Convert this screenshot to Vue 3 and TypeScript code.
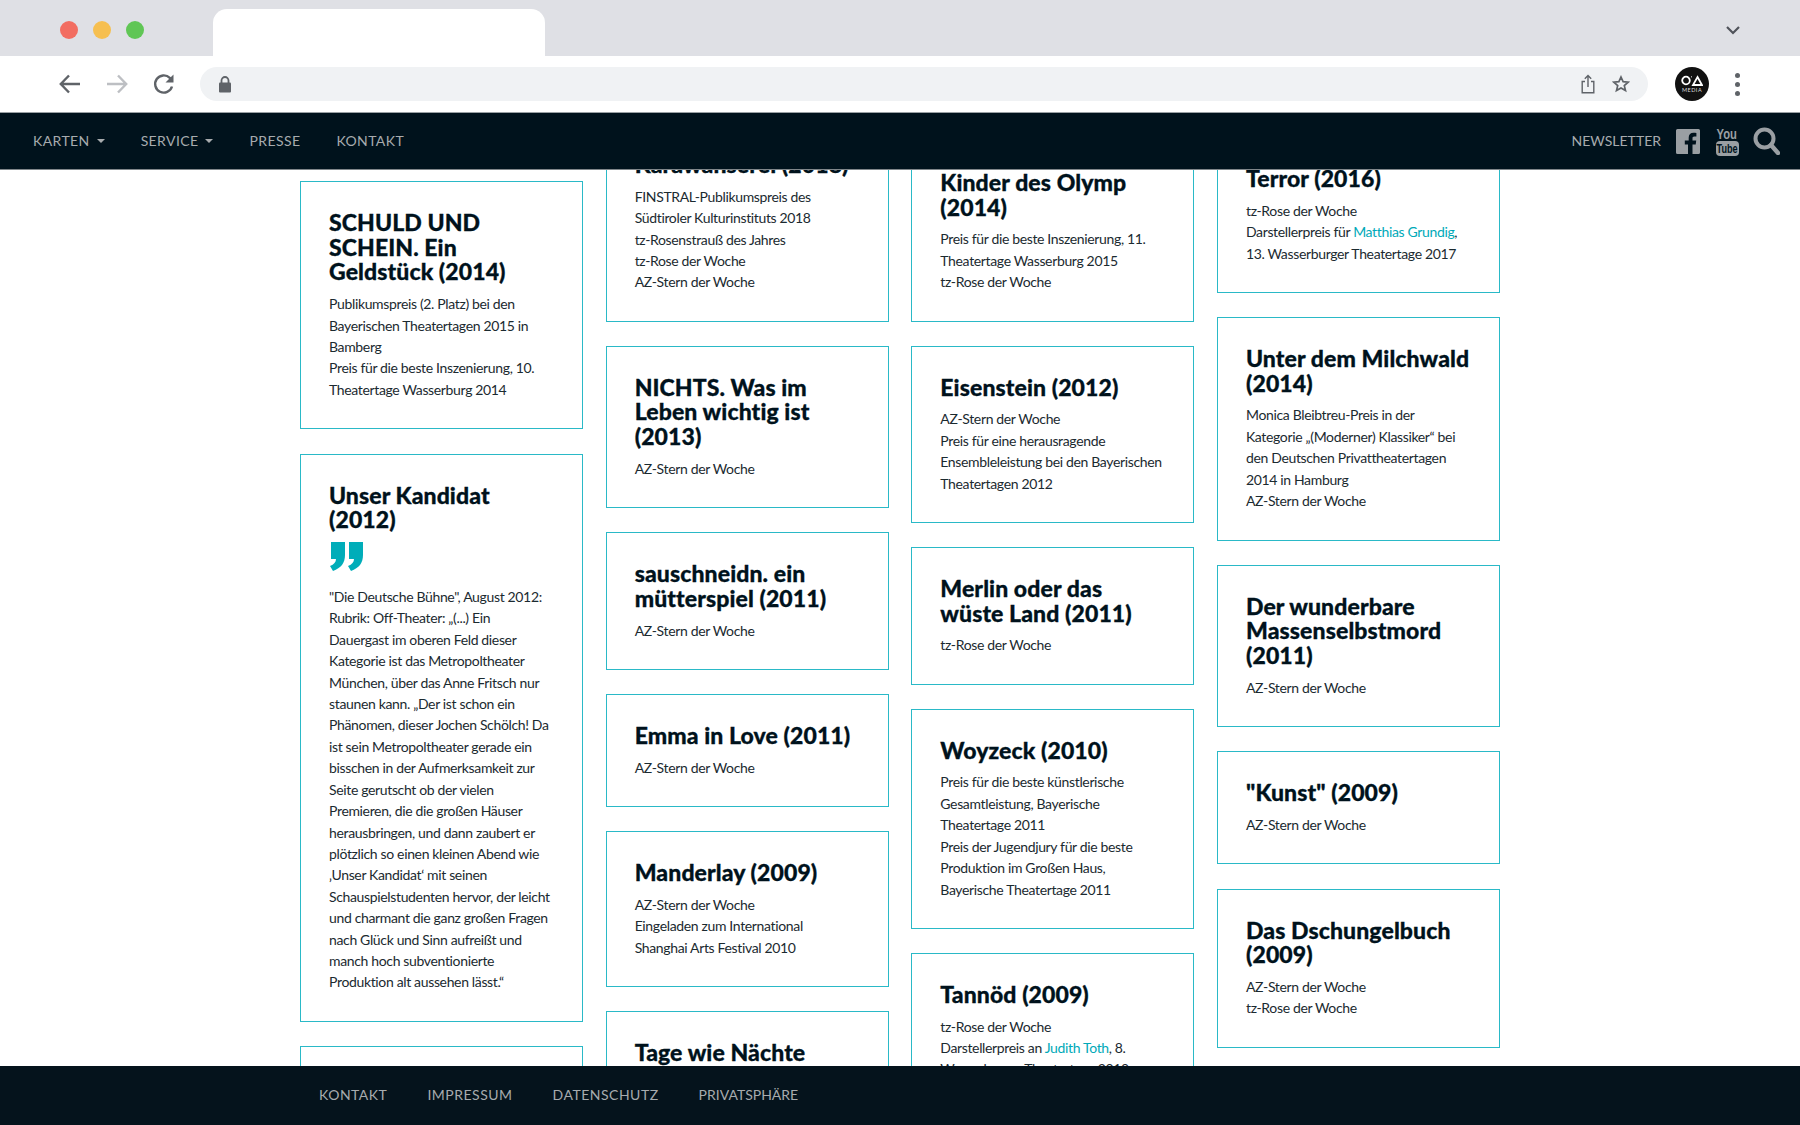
<script setup lang="ts">
interface Card {
  title: string[]
  lines: string[]
  quote?: boolean
}

// links inside a line are wrapped in *...*
const columns: { cls: string; cards: Card[] }[] = [
  {
    cls: 'col-a',
    cards: [
      {
        title: ['SCHULD UND', 'SCHEIN. Ein', 'Geldstück (2014)'],
        lines: [
          'Publikumspreis (2. Platz) bei den',
          'Bayerischen Theatertagen 2015 in',
          'Bamberg',
          'Preis für die beste Inszenierung, 10.',
          'Theatertage Wasserburg 2014',
        ],
      },
      {
        title: ['Unser Kandidat', '(2012)'],
        quote: true,
        lines: [
          '"Die Deutsche Bühne", August 2012:',
          'Rubrik: Off-Theater: „(...) Ein',
          'Dauergast im oberen Feld dieser',
          'Kategorie ist das Metropoltheater',
          'München, über das Anne Fritsch nur',
          'staunen kann. „Der ist schon ein',
          'Phänomen, dieser Jochen Schölch! Da',
          'ist sein Metropoltheater gerade ein',
          'bisschen in der Aufmerksamkeit zur',
          'Seite gerutscht ob der vielen',
          'Premieren, die die großen Häuser',
          'herausbringen, und dann zaubert er',
          'plötzlich so einen kleinen Abend wie',
          '‚Unser Kandidat‘ mit seinen',
          'Schauspielstudenten hervor, der leicht',
          'und charmant die ganz großen Fragen',
          'nach Glück und Sinn aufreißt und',
          'manch hoch subventionierte',
          'Produktion alt aussehen lässt.“',
        ],
      },
      // only the top edge of this one shows above the footer
      { title: [], lines: [] },
    ],
  },
  {
    cls: 'col-b',
    cards: [
      {
        title: ['Karawanserei (2018)'],
        lines: [
          'FINSTRAL-Publikumspreis des',
          'Südtiroler Kulturinstituts 2018',
          'tz-Rosenstrauß des Jahres',
          'tz-Rose der Woche',
          'AZ-Stern der Woche',
        ],
      },
      { title: ['NICHTS. Was im', 'Leben wichtig ist', '(2013)'], lines: ['AZ-Stern der Woche'] },
      { title: ['sauschneidn. ein', 'mütterspiel (2011)'], lines: ['AZ-Stern der Woche'] },
      { title: ['Emma in Love (2011)'], lines: ['AZ-Stern der Woche'] },
      {
        title: ['Manderlay (2009)'],
        lines: ['AZ-Stern der Woche', 'Eingeladen zum International', 'Shanghai Arts Festival 2010'],
      },
      { title: ['Tage wie Nächte'], lines: [] },
    ],
  },
  {
    cls: 'col-c',
    cards: [
      {
        title: ['Kinder des Olymp', '(2014)'],
        lines: ['Preis für die beste Inszenierung, 11.', 'Theatertage Wasserburg 2015', 'tz-Rose der Woche'],
      },
      {
        title: ['Eisenstein (2012)'],
        lines: [
          'AZ-Stern der Woche',
          'Preis für eine herausragende',
          'Ensembleleistung bei den Bayerischen',
          'Theatertagen 2012',
        ],
      },
      { title: ['Merlin oder das', 'wüste Land (2011)'], lines: ['tz-Rose der Woche'] },
      {
        title: ['Woyzeck (2010)'],
        lines: [
          'Preis für die beste künstlerische',
          'Gesamtleistung, Bayerische',
          'Theatertage 2011',
          'Preis der Jugendjury für die beste',
          'Produktion im Großen Haus,',
          'Bayerische Theatertage 2011',
        ],
      },
      {
        title: ['Tannöd (2009)'],
        lines: ['tz-Rose der Woche', 'Darstellerpreis an *Judith Toth*, 8.', 'Wasserburger Theatertage 2010'],
      },
    ],
  },
  {
    cls: 'col-d',
    cards: [
      {
        title: ['Terror (2016)'],
        lines: ['tz-Rose der Woche', 'Darstellerpreis für *Matthias Grundig*,', '13. Wasserburger Theatertage 2017'],
      },
      {
        title: ['Unter dem Milchwald', '(2014)'],
        lines: [
          'Monica Bleibtreu-Preis in der',
          'Kategorie „(Moderner) Klassiker“ bei',
          'den Deutschen Privattheatertagen',
          '2014 in Hamburg',
          'AZ-Stern der Woche',
        ],
      },
      { title: ['Der wunderbare', 'Massenselbstmord', '(2011)'], lines: ['AZ-Stern der Woche'] },
      { title: ['"Kunst" (2009)'], lines: ['AZ-Stern der Woche'] },
      { title: ['Das Dschungelbuch', '(2009)'], lines: ['AZ-Stern der Woche', 'tz-Rose der Woche'] },
    ],
  },
]

const parts = (line: string) => line.split('*')
</script>

<template>
  <div class="page">
    <div class="tabstrip">
      <div class="lights">
        <span class="light red"></span>
        <span class="light yellow"></span>
        <span class="light green"></span>
      </div>
      <div class="tab"></div>
      <svg class="tab-menu" width="16" height="10" viewBox="0 0 16 10">
        <path d="M2 2l6 6 6-6" fill="none" stroke="#50535a" stroke-width="2.2" />
      </svg>
    </div>

    <div class="toolbar">
      <svg class="tool" width="24" height="24" viewBox="0 0 24 24">
        <path d="M22 12H3M11 3.5L2.8 12l8.2 8.5" fill="none" stroke="#5f6368" stroke-width="2.4" />
      </svg>
      <svg class="tool" width="24" height="24" viewBox="0 0 24 24">
        <path d="M2 12h19M13 3.5l8.2 8.5-8.2 8.5" fill="none" stroke="#bdbfc3" stroke-width="2.4" />
      </svg>
      <svg class="tool" width="24" height="24" viewBox="0 0 24 24">
        <path d="M20 14.5a8.6 8.6 0 1 1-2.2-8.6L20 8" fill="none" stroke="#5f6368" stroke-width="2.4" />
        <path d="M21.5 2.5v8h-8z" fill="#5f6368" />
      </svg>
      <div class="address">
        <svg width="14" height="17" viewBox="0 0 14 17">
          <path d="M3.5 7V4.5a3.5 3.5 0 0 1 7 0V7" fill="none" stroke="#5f6368" stroke-width="1.8" />
          <rect x="1" y="6.5" width="12" height="10" rx="1" fill="#5f6368" />
        </svg>
        <div class="address-icons">
          <svg width="14" height="20" viewBox="0 0 14 20">
            <path d="M4 7.500H1.200v11.300h11.600V7.500H10M7 13V1.800M3.800 4.800L7 1.600l3.200 3.200" fill="none" stroke="#5f6368" stroke-width="1.400" />
          </svg>
          <svg width="18" height="18" viewBox="0 0 18 18">
            <path d="M9 2l2.100 4.700 5.100.5-3.900 3.400 1.200 5L9 13l-4.500 2.600 1.200-5-3.900-3.400 5.100-.5z" fill="none" stroke="#5f6368" stroke-width="1.700" />
          </svg>
        </div>
      </div>
      <div class="avatar">
        <svg width="22" height="11" viewBox="0 0 22 11">
          <circle cx="5" cy="5.500" r="3.800" fill="none" stroke="#fff" stroke-width="1.800" />
          <path d="M10 1.500l1-.5-.3 2z" fill="#fff" />
          <path d="M16.500 2L21 10h-9z" fill="none" stroke="#fff" stroke-width="1.800" />
        </svg>
        <span class="avatar-text">MEDIA</span>
      </div>
      <div class="kebab"><i></i><i></i><i></i></div>
    </div>

    <nav class="topnav">
      <div class="nav-links">
        <a>KARTEN <span class="caret"></span></a>
        <a>SERVICE <span class="caret"></span></a>
        <a>PRESSE</a>
        <a>KONTAKT</a>
      </div>
      <div class="nav-right">
        <a class="newsletter">NEWSLETTER</a>
        <svg class="fb" width="24" height="25" viewBox="0 0 24 25">
          <path d="M1.500 0h21A1.500 1.500 0 0 1 24 1.500v22a1.500 1.500 0 0 1-1.500 1.500h-6v-9.600h3.200l.5-3.800h-3.700V9.200c0-1.100.3-1.800 1.900-1.800h2V4c-.4 0-1.500-.2-2.900-.2-2.900 0-4.800 1.800-4.800 5v2.800H8.800v3.800H12V25H1.500A1.500 1.500 0 0 1 0 23.500v-22A1.500 1.500 0 0 1 1.500 0z" fill="#9a9fa3" />
        </svg>
        <div class="yt">
          <span class="yt-you">You</span>
          <span class="yt-tube"><span>Tube</span></span>
        </div>
        <svg class="search" width="27" height="28" viewBox="0 0 27 28">
          <circle cx="11.500" cy="11.500" r="9" fill="none" stroke="#9a9fa3" stroke-width="4" />
          <path d="M18 18l7 8" fill="none" stroke="#9a9fa3" stroke-width="4.400" stroke-linecap="round" />
        </svg>
      </div>
    </nav>

    <main class="content">
      <div class="grid">
        <div v-for="col in columns" :key="col.cls" class="col" :class="col.cls">
          <article v-for="(card, n) in col.cards" :key="n" class="card">
            <h3>
              <span v-for="t in card.title" :key="t" class="row">{{ t }}</span>
            </h3>
            <svg v-if="card.quote" class="quote" width="33" height="29" viewBox="0 0 33 29">
              <path d="M1 0h14v13c0 8-4 13-12 16l-3-5c4-1.500 6-4 6-7H1zM19 0h14v13c0 8-4 13-12 16l-3-5c4-1.500 6-4 6-7h-5z" fill="#00adb9" />
            </svg>
            <p>
              <span v-for="(line, i) in card.lines" :key="i" class="row">
                <template v-for="(part, j) in parts(line)" :key="j">
                  <a v-if="j % 2 === 1">{{ part }}</a>
                  <template v-else>{{ part }}</template>
                </template>
              </span>
            </p>
          </article>
        </div>
      </div>
    </main>

    <footer class="bottom">
      <a>KONTAKT</a>
      <a>IMPRESSUM</a>
      <a>DATENSCHUTZ</a>
      <a class="tight">PRIVATSPHÄRE</a>
    </footer>
  </div>
</template>

<style scoped>
.page {
  width: 1800px;
  height: 1125px;
  display: flex;
  flex-direction: column;
  overflow: hidden;
  background: #fff;
  font-family: Lato, "Liberation Sans", sans-serif;
}

.tabstrip {
  height: 56px;
  background: #dfe0e5;
  display: flex;
  align-items: flex-end;
  position: relative;
  flex: none;
}

.lights {
  display: flex;
  gap: 15px;
  padding: 0 0 17px 60px;
}

.light {
  width: 18px;
  height: 18px;
  border-radius: 50%;
}

.red { background: #f26d61; }
.yellow { background: #f6bf50; }
.green { background: #60c655; }

.tab {
  width: 332px;
  height: 47px;
  margin-left: 69px;
  background: #fff;
  border-radius: 14px 14px 0 0;
}

.tab-menu {
  position: absolute;
  right: 59px;
  top: 25px;
}

.toolbar {
  height: 56px;
  flex: none;
  display: flex;
  align-items: center;
  padding-left: 58px;
  box-sizing: border-box;
}

.tool {
  margin-right: 29px;
  width: 24px;
}

.tool:nth-child(3) {
  margin-right: 24px;
  margin-left: -6px;
}

.tool:nth-child(2) {
  margin-left: -6px;
}

.address {
  width: 1448px;
  height: 34px;
  border-radius: 17px;
  background: #f0f2f4;
  display: flex;
  align-items: center;
  justify-content: space-between;
  padding: 0 18px 0 18px;
  box-sizing: border-box;
}

.address-icons {
  display: flex;
  align-items: center;
  gap: 17px;
}

.avatar {
  width: 34px;
  height: 34px;
  margin-left: 27px;
  border-radius: 50%;
  background: #111;
  display: flex;
  flex-direction: column;
  align-items: center;
  justify-content: center;
  gap: 1px;
}

.avatar-text {
  color: #ddd;
  font-size: 5.500px;
  line-height: 6px;
  letter-spacing: 0.5px;
}

.kebab {
  margin-left: 26px;
  display: flex;
  flex-direction: column;
  gap: 4px;
}

.kebab i {
  width: 5px;
  height: 5px;
  border-radius: 50%;
  background: #5f6368;
}

.topnav {
  height: 58px;
  flex: none;
  box-sizing: border-box;
  background: #00121c;
  border-top: 1px solid #9aa0a4;
  border-bottom: 1px solid #80868a;
  display: flex;
  align-items: center;
  justify-content: space-between;
  padding: 0 20px 0 33px;
  color: #a7abae;
  font-size: 14px;
  letter-spacing: 0.4px;
  position: relative;
  z-index: 2;
}

.nav-links {
  display: flex;
  align-items: center;
  gap: 36px;
  padding-bottom: 2px;
}

.caret {
  display: inline-block;
  width: 0;
  height: 0;
  margin-left: 3px;
  vertical-align: 3px;
  border-left: 4px solid transparent;
  border-right: 4px solid transparent;
  border-top: 4px solid #a7abae;
}

.nav-right {
  display: flex;
  align-items: center;
}

.newsletter {
  margin-right: 15px;
  padding-bottom: 2px;
  letter-spacing: 0;
}

.yt {
  width: 24px;
  margin-left: 15px;
  display: flex;
  flex-direction: column;
  align-items: center;
  font-family: "Liberation Sans Narrow", "Liberation Sans", sans-serif;
  font-weight: 700;
  letter-spacing: 0;
}

.yt-you {
  color: #9a9fa3;
  font-size: 14px;
  line-height: 14px;
  transform: scaleX(0.8);
}

.yt-tube {
  width: 23px;
  height: 15px;
  background: #9a9fa3;
  border-radius: 4px;
  color: #00121c;
  font-size: 13px;
  line-height: 15px;
  display: flex;
  justify-content: center;
}

.yt-tube span {
  flex: none;
  transform: scaleX(0.7);
}

.search { margin-left: 14px; }

.content {
  flex: 1;
  min-height: 0;
  overflow: hidden;
}

.grid {
  width: 1200px;
  margin: 0 auto;
  display: grid;
  grid-template-columns: repeat(4, 283px);
  column-gap: 22.67px;
  align-items: start;
}

.col {
  display: flex;
  flex-direction: column;
  gap: 24px;
}

/* the list is scrolled, so each column starts at its own offset */
.col-a { margin-top: 11px; gap: 24.5px; }
.col-b { margin-top: -47px; }
.col-c { margin-top: -29px; }
.col-d { margin-top: -33px; gap: 24.15px; }

.card {
  border: 1px solid #2ab9c7;
  padding: 28px;
  color: #00121c;
}

.card h3 {
  margin: 0;
  font-size: 23px;
  line-height: 24.7px;
  font-weight: 900;
  letter-spacing: 0.1px;
  -webkit-text-stroke: 0.3px #00121c;
}

.card p {
  margin: 9px 0 0;
  font-size: 14px;
  letter-spacing: -0.35px;
  line-height: 21.4px;
  color: #1b2a30;
}

.card a {
  color: #00a9b8;
}

.row {
  display: block;
  white-space: nowrap;
}

.quote {
  display: block;
  margin: 10px 0 15px 1px;
}

.quote + p {
  margin-top: 0;
}

.bottom {
  height: 59px;
  flex: none;
  box-sizing: border-box;
  background: #05131c;
  display: flex;
  align-items: center;
  gap: 40px;
  padding: 0 0 2px 319px;
  color: #a7abae;
  font-size: 14px;
  letter-spacing: 0.5px;
  position: relative;
  z-index: 2;
}

.tight {
  letter-spacing: 0;
}
</style>
